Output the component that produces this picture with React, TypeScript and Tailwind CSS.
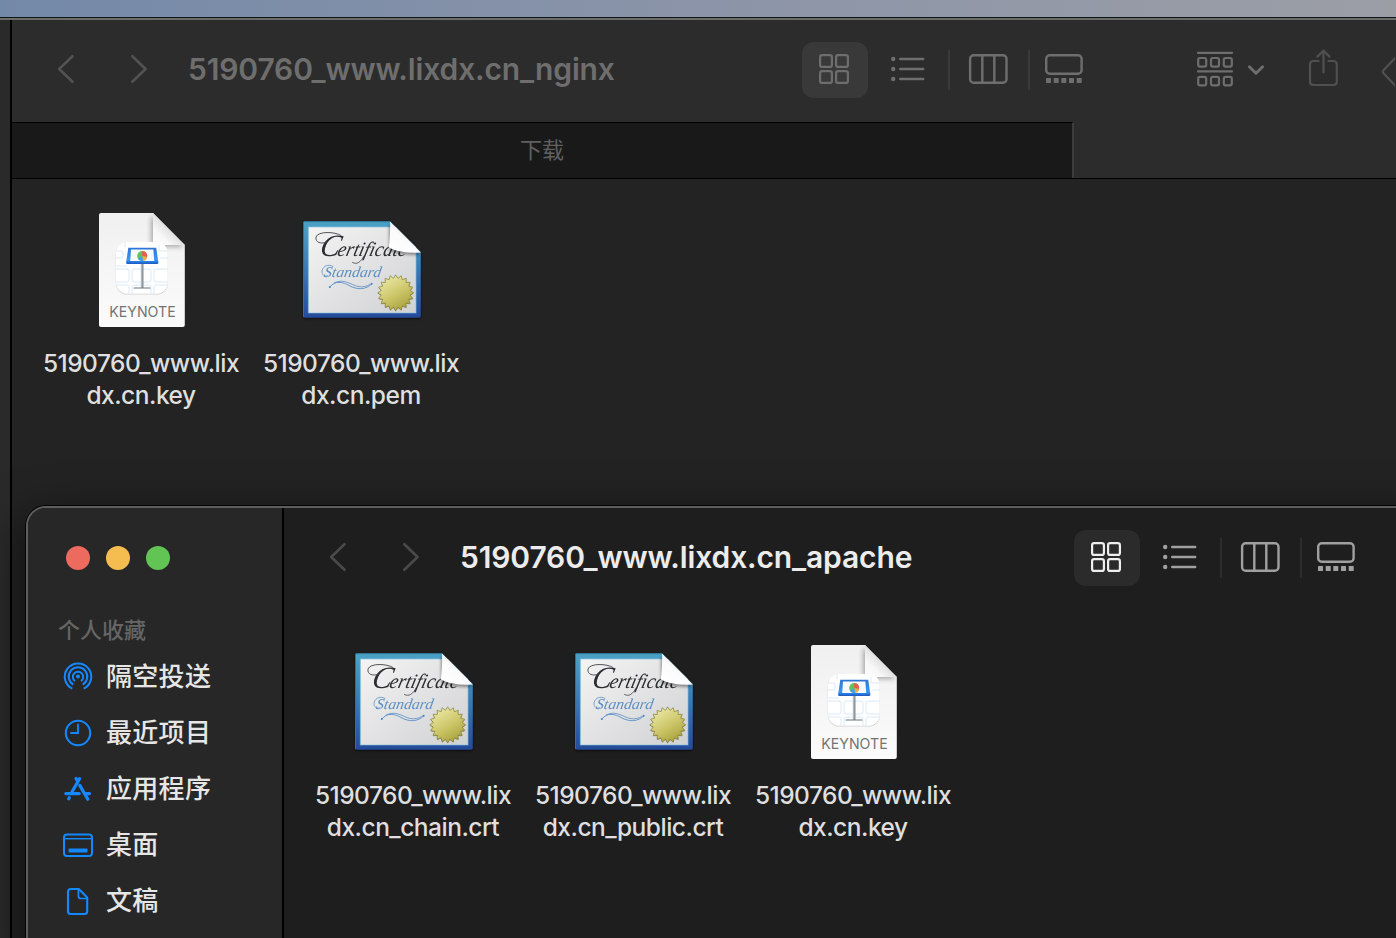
import React from "react";

const latin = "font-['Inter','Noto_Sans_CJK_SC',sans-serif]";

function Chevron({ dir }: { dir: "left" | "right" }) {
  return (
    <svg width="18" height="30" viewBox="0 0 18 30" fill="none" stroke="currentColor" strokeWidth="2.6" strokeLinecap="round" strokeLinejoin="round" className="shrink-0">
      <path d={dir === "left" ? "M15.5 2.2L2.2 15L15.5 27.8" : "M2.3 2.2L15.6 15L2.3 27.8"} />
    </svg>
  );
}

function ViewSwitcher({ active, idle, pill, rule }: { active: string; idle: string; pill: string; rule: string }) {
  return (
    <div className={`flex h-14 shrink-0 items-center ${idle}`}>
      <div className={`flex h-14 w-[66px] items-center rounded-xl pl-[17px] pb-0.5 ${pill} ${active}`}>
        <svg width="30" height="30" viewBox="0 0 30 30" fill="none" stroke="currentColor" strokeWidth="2.2">
          <rect x="1.1" y="1.1" width="11.8" height="11.8" rx="2" />
          <rect x="17.1" y="1.1" width="11.8" height="11.8" rx="2" />
          <rect x="1.1" y="17.1" width="11.8" height="11.8" rx="2" />
          <rect x="17.1" y="17.1" width="11.8" height="11.8" rx="2" />
        </svg>
      </div>
      <svg width="34" height="26" viewBox="0 0 34 26" fill="currentColor" className="mb-0.5 ml-[23px]">
        {[3, 13, 23].map((y) => (
          <g key={y}>
            <circle cx="2.2" cy={y} r="2.2" />
            <rect x="8" y={y - 1.3} width="25.4" height="2.6" rx="1.2" />
          </g>
        ))}
      </svg>
      <div className={`ml-[23px] h-10 w-0.5 ${rule}`} />
      <svg width="40" height="30" viewBox="0 0 40 30" fill="none" stroke="currentColor" strokeWidth="2.4" className="mb-0.5 ml-[18px]">
        <rect x="2.1" y="1.2" width="36.4" height="27.6" rx="3.6" />
        <path d="M14.3 1V29M26.3 1V29" strokeWidth="2.4" />
      </svg>
      <div className={`ml-5 h-10 w-0.5 ${rule}`} />
      <svg width="40" height="30" viewBox="0 0 40 30" fill="none" stroke="currentColor" strokeWidth="2.4" className="mb-0.5 ml-[14px]">
        <rect x="2.2" y="1.2" width="35.4" height="18.6" rx="3.6" />
        {[2, 9.7, 17.3, 25, 32.7].map((x) => (
          <rect key={x} x={x} y="24" width="5" height="5" rx="0.6" fill="currentColor" stroke="none" />
        ))}
      </svg>
    </div>
  );
}

const sealPoints = Array.from({ length: 40 }, (_, i) => {
  const r = i % 2 ? 14.6 : 18;
  const a = (i * Math.PI) / 20;
  return `${(97.7 + r * Math.sin(a)).toFixed(2)},${(86.8 - r * Math.cos(a)).toFixed(2)}`;
}).join(" ");

function CertificateIcon() {
  return (
    <svg width="128" height="128" viewBox="0 0 128 128" className="block shrink-0 drop-shadow-[0_1px_1px_rgba(0,0,0,0.6)]">
      <defs>
        <linearGradient id="certFrame" x1="0" y1="0" x2="0" y2="1">
          <stop offset="0" stopColor="#4ba3c5" />
          <stop offset="0.5" stopColor="#3a79b3" />
          <stop offset="1" stopColor="#23499a" />
        </linearGradient>
        <linearGradient id="certPaper" x1="0" y1="0" x2="1" y2="1">
          <stop offset="0" stopColor="#f4f4f4" />
          <stop offset="1" stopColor="#d0d1d3" />
        </linearGradient>
        <linearGradient id="certFold" x1="0" y1="1" x2="0.7" y2="0.2">
          <stop offset="0" stopColor="#ffffff" />
          <stop offset="0.6" stopColor="#fbfbfb" />
          <stop offset="1" stopColor="#d5d5d5" />
        </linearGradient>
        <linearGradient id="certSeal" x1="0.2" y1="0" x2="0.8" y2="1">
          <stop offset="0" stopColor="#eeebac" />
          <stop offset="0.55" stopColor="#cbc566" />
          <stop offset="1" stopColor="#a39c38" />
        </linearGradient>
        <filter id="certShade" x="-30%" y="-30%" width="160%" height="160%">
          <feGaussianBlur stdDeviation="1.8" />
        </filter>
        <clipPath id="certClip">
          <path d="M7 15.2H92L122.8 46V110Q122.8 111.8 121 111.8H7Q5 111.8 5 110V17Q5 15.2 7 15.2Z" />
        </clipPath>
      </defs>
      <g clipPath="url(#certClip)">
        <rect x="5" y="15" width="118" height="98" fill="url(#certFrame)" />
        <path d="M5.5 112V15.7H92" stroke="#2b7599" fill="none" />
        <path d="M10.4 107V20.9H118V107Z" fill="url(#certPaper)" stroke="#7fc0dc" strokeOpacity="0.6" strokeWidth="1.2" />
        <g transform="translate(0 49.6) skewX(-14)" fontFamily="Liberation Serif" fontStyle="italic" fill="#2b2d2f">
          <text x="20.5" y="0" fontSize="31" textLength="20" lengthAdjust="spacingAndGlyphs">C</text>
          <text x="38.5" y="0" fontSize="20.5" textLength="69" lengthAdjust="spacingAndGlyphs">ertificate</text>
        </g>
        <path d="M43 29.5C37 25.5 20 25 18 31C17 36.5 23 38.5 29 36" stroke="#444" strokeWidth="0.9" fill="none" strokeLinecap="round" />
        <path d="M66 50C63 56 59 59 54.5 56.5" stroke="#444" strokeWidth="0.8" fill="none" strokeLinecap="round" />
        <g transform="translate(0 70.6) skewX(-10)" fontFamily="Liberation Serif" fontStyle="italic" fill="#5b8fc3">
          <text x="25.5" y="0" fontSize="15" textLength="57" lengthAdjust="spacingAndGlyphs">Standard</text>
        </g>
        <path d="M35 60.5C30 57 23.5 61 24 66.5C24.5 70 28 70.6 30 69.5" stroke="#5b8fc3" strokeWidth="0.8" fill="none" strokeLinecap="round" />
        <path d="M31.5 81.5C37 74 45 76 51 79.5C59 84 68 84 74 77.5" stroke="#5b8ec4" strokeWidth="0.9" fill="none" />
        <path d="M36 77C46 72 53 79 60 80.5C65 81.5 69 80 72 78.5" stroke="#5b8ec4" strokeWidth="0.8" fill="none" />
        <circle cx="31.8" cy="81" r="1" fill="#4e86bd" />
        <circle cx="73.6" cy="77.8" r="1.1" fill="#4e86bd" />
        <path d="M91 18V44Q97 49 122 49Z" fill="#000" opacity="0.4" filter="url(#certShade)" />
      </g>
      <path d="M92 15.4L122.8 46.6Q102 47.5 90.8 41.5Q92.6 27 92 15.4Z" fill="url(#certFold)" />
      <polygon points={sealPoints} fill="#5c5824" opacity="0.5" transform="translate(0 0.8)" />
      <polygon points={sealPoints} fill="url(#certSeal)" stroke="#858035" strokeWidth="0.7" />
    </svg>
  );
}

function KeynoteIcon() {
  return (
    <svg width="128" height="128" viewBox="0 0 128 128" className="block shrink-0">
      <defs>
        <linearGradient id="kPaper" x1="0" y1="0" x2="0" y2="1">
          <stop offset="0" stopColor="#f0f0f0" />
          <stop offset="1" stopColor="#fbfbfb" />
        </linearGradient>
        <linearGradient id="kFold" x1="0" y1="1" x2="0.55" y2="0.45">
          <stop offset="0" stopColor="#ffffff" />
          <stop offset="0.5" stopColor="#f7f7f7" />
          <stop offset="1" stopColor="#dcdcdc" />
        </linearGradient>
        <linearGradient id="kScreen" x1="0" y1="0" x2="0" y2="1">
          <stop offset="0" stopColor="#2f74cf" />
          <stop offset="0.75" stopColor="#3b96f6" />
          <stop offset="0.86" stopColor="#2a7ae6" />
          <stop offset="1" stopColor="#1b58bd" />
        </linearGradient>
        <filter id="kShade" x="-30%" y="-30%" width="160%" height="160%">
          <feGaussianBlur stdDeviation="2.5" />
        </filter>
        <clipPath id="kClip">
          <path d="M23 7H75L106.8 39V119Q106.8 121 104.8 121H23Q21 121 21 119V9Q21 7 23 7Z" />
        </clipPath>
        <clipPath id="kTile">
          <rect x="38" y="36" width="51.8" height="51.8" rx="11.5" />
        </clipPath>
      </defs>
      <g clipPath="url(#kClip)">
        <rect x="21" y="7" width="86" height="114" fill="url(#kPaper)" />
        <path d="M73 9V41H106Z" fill="#000" opacity="0.3" filter="url(#kShade)" />
        <rect x="37.8" y="36.6" width="52.2" height="52" rx="11.5" fill="#cfcfcf" />
        <rect x="38" y="36" width="51.8" height="51.8" rx="11.5" fill="#ffffff" />
        <g clipPath="url(#kTile)" fill="none" stroke="#d6e6f6" strokeWidth="0.9">
          <rect x="28" y="45" width="17" height="7" rx="2" />
          <rect x="28" y="63" width="23" height="13" rx="2.5" />
          <rect x="54" y="63" width="19" height="13" rx="2.5" />
          <rect x="76" y="63" width="24" height="13" rx="2.5" />
          <path d="M38 60H49M82 52H90M38 79H49Q51 79 51 81V88M54 88V81Q54 79 56 79H71Q73 79 73 81V88M76 88V81Q76 79 78 79H90M47 36V41M81 39V45H90" />
        </g>
      </g>
      <path d="M75 7L106.8 39H78Q75 39 75 36Z" fill="url(#kFold)" />
      <rect x="62.9" y="57" width="2.6" height="25" fill="#7f8c98" />
      <rect x="63.3" y="57" width="0.9" height="25" fill="#c4cbd1" />
      <path d="M56 82H72" stroke="#6a747e" strokeWidth="1.2" strokeLinecap="round" />
      <path d="M50.3 41.8H78.2L80.4 56.5Q80.5 58 79 58H49.5Q48 58 48.1 56.5Z" fill="url(#kScreen)" />
      <path d="M53 43.6H75.4L76.2 55H52.2Z" fill="#f7f9fc" />
      <circle cx="64.2" cy="50" r="5" fill="#5fc35f" />
      <path d="M64.2 50V45A5 5 0 0 1 69.1 51Z" fill="#ef5a4b" />
      <path d="M64.2 50L69.1 51A5 5 0 0 1 65 54.9Z" fill="#f5a942" />
      <path d="M64.2 50L65 54.9A5 5 0 0 1 60 52.7Z" fill="#3fa2ea" />
      <text x="31.3" y="110.6" textLength="66.4" lengthAdjust="spacingAndGlyphs" fontFamily="Inter" fontSize="14.6" fill="#737373">KEYNOTE</text>
    </svg>
  );
}

type FileEntry = { kind: "key" | "cert"; lines: [string, string] };

function FileGrid({ files }: { files: FileEntry[] }) {
  return (
    <div className="flex">
      {files.map((f) => (
        <div key={f.lines.join("")} className="flex w-[220px] flex-col items-center">
          <div className="pl-0.5">{f.kind === "key" ? <KeynoteIcon /> : <CertificateIcon />}</div>
          <div className="mt-[13px] flex flex-col items-center whitespace-nowrap text-[24.5px] font-[450] leading-8 tracking-[-0.5px] text-[#dfdfdf]">
            <span>{f.lines[0]}</span>
            <span>{f.lines[1]}</span>
          </div>
        </div>
      ))}
    </div>
  );
}

function BackWindow() {
  return (
    <div className="absolute left-0 top-[17px] flex h-[921px] w-[1396px] flex-col border-t border-[#111317] bg-[#2c2c2c]">
      <div className="h-0.5 shrink-0 bg-[#6b6d69]" />
      <div className="-mt-px flex min-h-0 flex-1">
        <div className="mt-px w-3 shrink-0 border-r-2 border-black bg-[#2a2a2a]" />
        <div className="flex min-w-0 flex-1 flex-col">
          <div className="mt-px flex h-[102px] shrink-0 items-center overflow-hidden bg-[#2c2c2c] pb-0.5 text-[#6e6e6e]">
            <div className="ml-[45px] flex gap-[55px] pb-0.5 text-[#525252]">
              <Chevron dir="left" />
              <Chevron dir="right" />
            </div>
            <div className="ml-[40px] w-[614px] shrink-0 whitespace-nowrap pb-0.5 text-[30px] font-semibold leading-10 tracking-[-0.13px]">5190760_www.lixdx.cn_nginx</div>
            <ViewSwitcher active="text-[#6e6e6e]" idle="text-[#6e6e6e]" pill="bg-[#393939]" rule="bg-[#3a3a3a]" />
            <svg width="36" height="36" viewBox="0 0 36 36" fill="none" stroke="currentColor" strokeWidth="2.2" className="mb-0.5 ml-[113px] shrink-0">
              <path d="M1 1.8H35M1 20.3H35" strokeLinecap="round" />
              {[1.2, 14, 26.8].map((x) => (
                <g key={x}>
                  <rect x={x} y="7" width="8" height="8.6" rx="1.8" />
                  <rect x={x} y="25.8" width="8" height="8.6" rx="1.8" />
                </g>
              ))}
            </svg>
            <svg width="18" height="12" viewBox="0 0 18 12" fill="none" stroke="currentColor" strokeWidth="3" strokeLinecap="round" strokeLinejoin="round" className="ml-3.5 shrink-0">
              <path d="M2.4 2.8L9 9.3L15.6 2.8" />
            </svg>
            <svg width="30" height="38" viewBox="0 0 30 38" fill="none" stroke="#505050" strokeWidth="2.2" strokeLinecap="round" strokeLinejoin="round" className="mb-1 ml-[43px] shrink-0">
              <path d="M10.5 12H5.5Q2 12 2 15.5V32.5Q2 36 5.5 36H25.3Q28.8 36 28.8 32.5V15.5Q28.8 12 25.3 12H20.5" />
              <path d="M15.5 23.5V1.6M9.5 7.6L15.5 1.6L21.5 7.6" />
            </svg>
            <svg width="15" height="36" viewBox="0 0 15 36" fill="none" stroke="#505050" strokeWidth="2.2" strokeLinejoin="round" className="ml-[42px] mt-1 shrink-0">
              <path d="M18 1L3.5 16.3Q2.2 17.8 3.5 19.3L18 34.5" />
            </svg>
          </div>
          <div className="flex h-[57px] shrink-0 border-b border-black">
            <div className="flex h-full w-[1062px] items-center justify-center border-r-2 border-t border-r-[#3c3c3c] border-t-black bg-[#191919] text-[22px] text-[#606060]">
              下载
            </div>
          </div>
          <div className="min-h-0 flex-1 bg-[#232323] pl-[19px] pt-[27px]">
            <FileGrid
              files={[
                { kind: "key", lines: ["5190760_www.lix", "dx.cn.key"] },
                { kind: "cert", lines: ["5190760_www.lix", "dx.cn.pem"] },
              ]}
            />
          </div>
        </div>
      </div>
    </div>
  );
}

const sidebar = [
  {
    label: "隔空投送",
    icon: (
      <g strokeWidth="2">
        <circle cx="16" cy="15.6" r="2" fill="currentColor" stroke="none" />
        <path d="M13 20.1A5.2 5.2 0 1 1 19 20.1" />
        <path d="M11.3 23.6A9.3 9.3 0 1 1 20.7 23.6" />
        <path d="M10.3 27.6A13.2 13.2 0 1 1 21.7 27.6" />
      </g>
    ),
  },
  {
    label: "最近项目",
    icon: (
      <g strokeWidth="2.1">
        <circle cx="16" cy="16" r="12.2" />
        <path d="M16 7.5V16H9" strokeWidth="1.8" strokeLinecap="round" />
      </g>
    ),
  },
  {
    label: "应用程序",
    icon: (
      <g strokeWidth="3.2" strokeLinecap="round">
        <path d="M3.8 20.6H17.2M24 20.6H27.5" />
        <path d="M17.6 5.7L9.8 19.2M14 5.5L15.4 7.9" />
        <path d="M17.8 12.4L25.8 26.2M7.3 24.7L6.7 25.9" />
      </g>
    ),
  },
  {
    label: "桌面",
    icon: (
      <g strokeWidth="2">
        <rect x="2" y="5.4" width="28" height="21.6" rx="3" />
        <path d="M2 9.7H30" strokeWidth="1.5" />
        <rect x="6.5" y="19.6" width="19" height="4" rx="0.8" fill="currentColor" stroke="none" />
      </g>
    ),
  },
  {
    label: "文稿",
    icon: (
      <g strokeWidth="2.1" strokeLinejoin="round">
        <path d="M16.8 4H8.8Q6 4 6 6.8V26.2Q6 29 8.8 29H22.4Q25.2 29 25.2 26.2V12.6Z" />
        <path d="M16.4 4.2V11Q16.4 13.5 18.9 13.5H25" strokeWidth="1.7" />
      </g>
    ),
  },
];

function FrontWindow() {
  return (
    <div className="absolute left-[26px] top-[506px] flex h-[460px] w-[1420px] overflow-hidden rounded-[20px] border-2 border-[#5e5e5e] bg-[#1e1e1e] shadow-[0_0_0_1px_#050505,0_14px_44px_6px_rgba(0,0,0,0.5)]">
      <div className="flex w-[256px] shrink-0 flex-col border-r-2 border-black bg-[#272727]">
        <div className="ml-[38px] mt-[38px] flex gap-4">
          <div className="size-6 rounded-full bg-[#ed6a5e]" />
          <div className="size-6 rounded-full bg-[#f5bd4f]" />
          <div className="size-6 rounded-full bg-[#61c454]" />
        </div>
        <div className="ml-[30px] mt-[44px] h-8 text-[22px] font-medium leading-8 text-[#656565]">个人收藏</div>
        <div className="mt-[3px]">
          {sidebar.map((s) => (
            <div key={s.label} className="flex h-14 items-center gap-3 pl-[34px]">
              <svg width="32" height="32" viewBox="0 0 32 32" fill="none" stroke="currentColor" className="shrink-0 text-[#1488ff]">
                {s.icon}
              </svg>
              <span className="text-[26px] font-medium leading-8 tracking-[0.3px] text-[#e6e6e6]">{s.label}</span>
            </div>
          ))}
        </div>
      </div>
      <div className="flex flex-1 flex-col">
        <div className="flex h-[100px] shrink-0 items-center">
          <div className="ml-[45px] flex gap-[55px] pb-0.5 text-[#4a4a4a]">
            <Chevron dir="left" />
            <Chevron dir="right" />
          </div>
          <div className="ml-[40px] w-[614px] shrink-0 whitespace-nowrap pb-0.5 text-[30px] font-semibold leading-10 tracking-[-0.13px] text-[#ececec]">5190760_www.lixdx.cn_apache</div>
          <ViewSwitcher active="text-[#eeeeee]" idle="text-[#a0a0a0]" pill="bg-[#2b2b2b]" rule="bg-[#2d2d2d]" />
        </div>
        <div className="pl-[19px] pt-[30px]">
          <FileGrid
            files={[
              { kind: "cert", lines: ["5190760_www.lix", "dx.cn_chain.crt"] },
              { kind: "cert", lines: ["5190760_www.lix", "dx.cn_public.crt"] },
              { kind: "key", lines: ["5190760_www.lix", "dx.cn.key"] },
            ]}
          />
        </div>
      </div>
    </div>
  );
}

export default function App() {
  return (
    <div className={`relative h-[938px] w-[1396px] overflow-hidden bg-gradient-to-r from-[#7389a8] via-[#8b94a8] to-[#9b9ea5] ${latin}`}>
      <BackWindow />
      <FrontWindow />
    </div>
  );
}
